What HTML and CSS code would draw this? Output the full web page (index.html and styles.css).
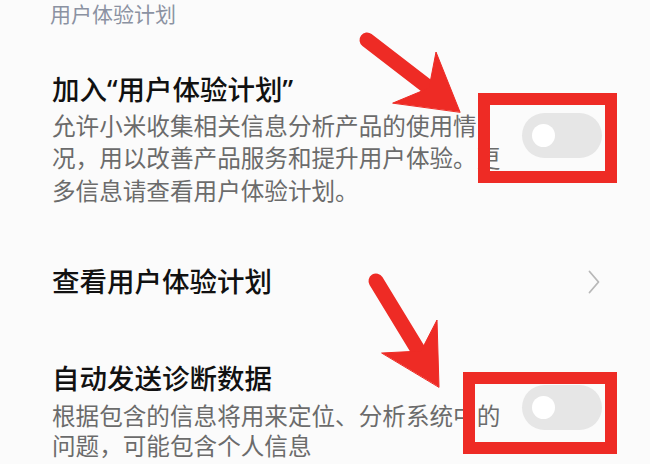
FILE: index.html
```html
<!DOCTYPE html>
<html lang="zh-CN">
<head>
    <meta charset="UTF-8">
    <meta name="viewport" content="width=device-width, initial-scale=1.0">
    <title>用户体验计划</title>
    <link rel="stylesheet" href="styles.css">
</head>
<body>
    <div class="page">
        <div class="section-title">用户体验计划</div>

        <div class="item item-first">
            <div class="item-text">
                <div class="item-title">加入“用户体验计划”</div>
                <div class="item-desc">允许小米收集相关信息分析产品的使用情<br>况，用以改善产品服务和提升用户体验。更<br>多信息请查看用户体验计划。</div>
            </div>
            <div class="switch"><span class="knob"></span></div>
        </div>

        <div class="item item-link">
            <div class="item-text">
                <div class="item-title">查看用户体验计划</div>
            </div>
            <svg class="chevron" width="12" height="24" viewBox="0 0 12 24">
                <polyline points="1.5,1.5 10.5,12 1.5,22.5" fill="none" stroke="#b8b8b8" stroke-width="1.8" stroke-linecap="round" stroke-linejoin="round"/>
            </svg>
        </div>

        <div class="item item-last">
            <div class="item-text">
                <div class="item-title">自动发送诊断数据</div>
                <div class="item-desc">根据包含的信息将用来定位、分析系统中的<br>问题，可能包含个人信息</div>
            </div>
            <div class="switch"><span class="knob"></span></div>
        </div>

        <!-- red markers drawn on top -->
        <div class="mark mark-one"></div>
        <div class="mark mark-two"></div>
        <svg class="arrows" width="650" height="464" viewBox="0 0 650 464">
            <g fill="#ee2b25" stroke="#ee2b25" stroke-linecap="round" stroke-linejoin="round">
                <line x1="367" y1="40" x2="428" y2="87" stroke-width="15"/>
                <path d="M460,112 L436,52 L429,88 L393,103 Z" stroke-width="1"/>
                <line x1="376" y1="281" x2="418" y2="350" stroke-width="15"/>
                <path d="M439,387 L437,320 L421,351 L382,353 Z" stroke-width="1"/>
            </g>
        </svg>
    </div>
</body>
</html>
```

FILE: styles.css
```css
body {
    margin: 0;
    background: #fbfbfb;
    font-family: "Noto Sans", "Noto Sans CJK SC", sans-serif;
}
.page {
    position: relative;
    width: 650px;
    height: 464px;
    overflow: hidden;
}
.section-title {
    padding-left: 50px;
    font-size: 21px;
    line-height: 28px;
    color: #8b92a2;
}
.item {
    display: flex;
    align-items: center;
    padding: 29px 48px 28px 52px;
}
.item-first {
    padding-top: 43.5px;
}
.item-link {
    padding-top: 28.5px;
    padding-bottom: 32px;
}
.item-text {
    flex: 1;
}
.item-title {
    font-size: 27.5px;
    line-height: 36px;
    font-weight: 500;
    color: #111;
}
.item-desc {
    margin-top: 2px;
    font-size: 23.6px;
    line-height: 32.5px;
    color: #6b6b6b;
    white-space: nowrap;
}
.item-last .item-desc {
    margin-top: 4px;
    line-height: 30px;
}
.switch {
    position: relative;
    width: 80px;
    height: 45px;
    margin-bottom: 7px;
    border-radius: 23px;
    background: #e6e6e6;
}
.knob {
    position: absolute;
    left: 10px;
    top: 11px;
    width: 23px;
    height: 23px;
    border-radius: 50%;
    background: #fff;
}
.chevron {
    display: block;
    margin-right: 2px;
}
.mark {
    position: absolute;
    border: 12px solid #ee2b25;
    box-sizing: border-box;
}
.mark-one {
    left: 478px;
    top: 93px;
    width: 139px;
    height: 90px;
}
.mark-two {
    left: 463px;
    top: 372px;
    width: 154px;
    height: 82px;
}
.arrows {
    position: absolute;
    left: 0;
    top: 0;
}
```
